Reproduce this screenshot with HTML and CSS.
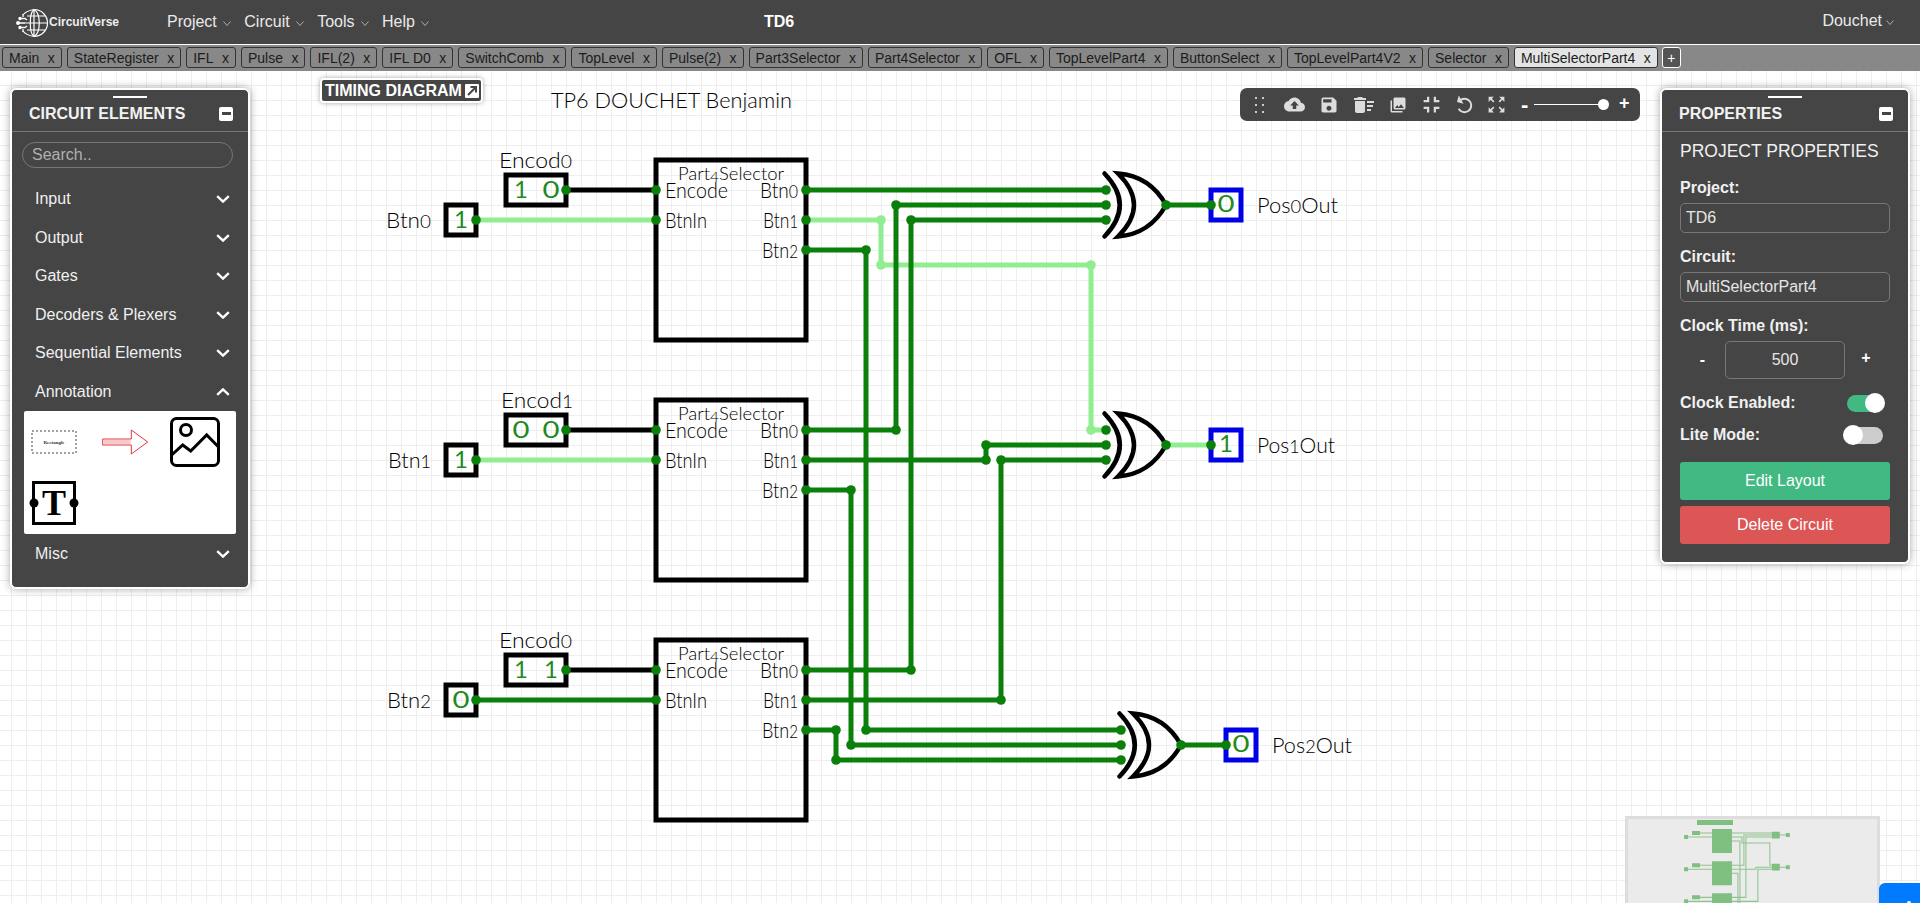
FILE: index.html
```html
<!DOCTYPE html>
<html lang="en">
<head>
<meta charset="utf-8">
<title>CircuitVerse - TD6</title>
<link rel="stylesheet" href="styles.css">
</head>
<body>
<svg class="defs" width="0" height="0" aria-hidden="true">
  <symbol id="nav-chev" viewBox="0 0 8 5"><path d="M.5.5 4 4.5 7.5.5" fill="none" stroke="#c8c8c8" stroke-width=".8"/></symbol>
  <symbol id="chev-down" viewBox="0 0 14 8"><path d="M1.2 1.2 7 6.6l5.8-5.4" fill="none" stroke="#fff" stroke-width="2.4"/></symbol>
  <symbol id="chev-up" viewBox="0 0 14 8"><path d="M1.2 6.8 7 1.4l5.8 5.4" fill="none" stroke="#fff" stroke-width="2.4"/></symbol>
</svg>

<header class="navbar">
  <div class="nav-left">
    <div class="logo">
      <svg class="globe" width="33" height="30" viewBox="0 0 33 30" fill="none" stroke="#fff" stroke-width="1.2">
        <path d="M18 1.5a13.5 13.5 0 1 1 0 27"/>
        <path d="M18 1.5C25 5 25 25 18 28.500M18 1.500C13 5 13 25 18 28.500M18 1.500V28.500"/>
        <path d="M11 8H29M9 15H31.500M11 22H29"/>
        <path d="M18 1.500C12 2.500 9 4 7 7M18 28.500C12 27.500 9 26 7 23"/>
        <path d="M2 15H9M4 10.500H9L11 12M4 19.500H9L11 18M7 6V9M7 24V21" stroke-width="1.300"/>
        <circle cx="2" cy="15" r="1.300" fill="#fff"/>
        <circle cx="4" cy="10.500" r="1.100" fill="#fff"/>
        <circle cx="4" cy="19.500" r="1.100" fill="#fff"/>
      </svg>
      <span class="logo-text">CircuitVerse</span>
    </div>
    <nav class="nav-menu">
      <div class="nav-item">Project<svg class="nav-chev"><use href="#nav-chev"/></svg></div>
      <div class="nav-item">Circuit<svg class="nav-chev"><use href="#nav-chev"/></svg></div>
      <div class="nav-item">Tools<svg class="nav-chev"><use href="#nav-chev"/></svg></div>
      <div class="nav-item">Help<svg class="nav-chev"><use href="#nav-chev"/></svg></div>
    </nav>
  </div>
  <div class="project-name">TD6</div>
  <div class="user">Douchet<svg class="nav-chev"><use href="#nav-chev"/></svg></div>
</header>

<div class="tabbar">
  <div class="tab"><span>Main</span><span class="tab-x">x</span></div>
  <div class="tab"><span>StateRegister</span><span class="tab-x">x</span></div>
  <div class="tab"><span>IFL</span><span class="tab-x">x</span></div>
  <div class="tab"><span>Pulse</span><span class="tab-x">x</span></div>
  <div class="tab"><span>IFL(2)</span><span class="tab-x">x</span></div>
  <div class="tab"><span>IFL D0</span><span class="tab-x">x</span></div>
  <div class="tab"><span>SwitchComb</span><span class="tab-x">x</span></div>
  <div class="tab"><span>TopLevel</span><span class="tab-x">x</span></div>
  <div class="tab"><span>Pulse(2)</span><span class="tab-x">x</span></div>
  <div class="tab"><span>Part3Selector</span><span class="tab-x">x</span></div>
  <div class="tab"><span>Part4Selector</span><span class="tab-x">x</span></div>
  <div class="tab"><span>OFL</span><span class="tab-x">x</span></div>
  <div class="tab"><span>TopLevelPart4</span><span class="tab-x">x</span></div>
  <div class="tab"><span>ButtonSelect</span><span class="tab-x">x</span></div>
  <div class="tab"><span>TopLevelPart4V2</span><span class="tab-x">x</span></div>
  <div class="tab"><span>Selector</span><span class="tab-x">x</span></div>
  <div class="tab tab-active"><span>MultiSelectorPart4</span><span class="tab-x">x</span></div>
  <div class="tab-add">+</div>
</div>

<main class="canvas">
  <svg class="circuit" width="1920" height="832" viewBox="0 71 1920 832">
    <!-- wires -->
    <path class="w-light" d="M476 220H656M476 460H656M806 220H881V265H1091V430H1106M1166 445H1211"/>
    <path class="w-black" d="M566 190H656M566 430H656M566 670H656"/>
    <path class="w-dark" d="M806 190H1106M806 250H866V730H1121M1106 205H896V430H806M1106 220H911V670H806M806 460H986V445H1106M1106 460H1001V700H806M806 490H851V745H1121M476 700H656M806 730H836V760H1121M1166 205H1211M1181 745H1226"/>

    <!-- selector blocks -->
    <rect class="box" x="656" y="160" width="150" height="180"/>
    <rect class="box" x="656" y="400" width="150" height="180"/>
    <rect class="box" x="656" y="640" width="150" height="180"/>

    <!-- input boxes -->
    <rect class="box" x="506" y="175" width="60" height="30"/>
    <rect class="box" x="446" y="205" width="30" height="30"/>
    <rect class="box" x="506" y="415" width="60" height="30"/>
    <rect class="box" x="446" y="445" width="30" height="30"/>
    <rect class="box" x="506" y="655" width="60" height="30"/>
    <rect class="box" x="446" y="685" width="30" height="30"/>

    <!-- output boxes -->
    <rect class="box-out" x="1211" y="190" width="30" height="30"/>
    <rect class="box-out" x="1211" y="430" width="30" height="30"/>
    <rect class="box-out" x="1226" y="730" width="30" height="30"/>

    <!-- XOR gates -->
    <g class="gate">
      <path d="M1104.5 173.5Q1135 205 1104.5 236.5M1118 173.5Q1150 205 1118 236.5Q1150 234 1166 205Q1150 176 1118 173.5Z"/>
      <path d="M1104.5 413.5Q1135 445 1104.5 476.5M1118 413.5Q1150 445 1118 476.5Q1150 474 1166 445Q1150 416 1118 413.5Z"/>
      <path d="M1119.5 713.5Q1150 745 1119.5 776.5M1133 713.5Q1165 745 1133 776.5Q1165 774 1181 745Q1165 716 1133 713.5Z"/>
    </g>

    <!-- nodes -->
    <g class="n-light">
      <circle cx="881" cy="220"/><circle cx="881" cy="265"/><circle cx="1091" cy="265"/><circle cx="1091" cy="430"/>
    </g>
    <g class="n-dark">
      <circle cx="566" cy="190"/><circle cx="476" cy="220"/><circle cx="656" cy="190"/><circle cx="656" cy="220"/>
      <circle cx="806" cy="190"/><circle cx="806" cy="220"/><circle cx="806" cy="250"/>
      <circle cx="566" cy="430"/><circle cx="476" cy="460"/><circle cx="656" cy="430"/><circle cx="656" cy="460"/>
      <circle cx="806" cy="430"/><circle cx="806" cy="460"/><circle cx="806" cy="490"/>
      <circle cx="566" cy="670"/><circle cx="476" cy="700"/><circle cx="656" cy="670"/><circle cx="656" cy="700"/>
      <circle cx="806" cy="670"/><circle cx="806" cy="700"/><circle cx="806" cy="730"/>
      <circle cx="1106" cy="190"/><circle cx="1106" cy="205"/><circle cx="1106" cy="220"/>
      <circle cx="1106" cy="430"/><circle cx="1106" cy="445"/><circle cx="1106" cy="460"/>
      <circle cx="1121" cy="730"/><circle cx="1121" cy="745"/><circle cx="1121" cy="760"/>
      <circle cx="1166" cy="205"/><circle cx="1211" cy="205"/>
      <circle cx="1166" cy="445"/><circle cx="1211" cy="445"/>
      <circle cx="1181" cy="745"/><circle cx="1226" cy="745"/>
      <circle cx="866" cy="250"/><circle cx="896" cy="205"/><circle cx="911" cy="220"/>
      <circle cx="896" cy="430"/><circle cx="986" cy="460"/><circle cx="986" cy="445"/>
      <circle cx="1001" cy="460"/><circle cx="851" cy="490"/><circle cx="851" cy="745"/>
      <circle cx="911" cy="670"/><circle cx="1001" cy="700"/><circle cx="866" cy="730"/>
      <circle cx="836" cy="730"/><circle cx="836" cy="760"/>
    </g>

    <!-- values -->
    <text class="val" x="521" y="198">1</text>
    <text class="val" x="551" y="198" textLength="17" lengthAdjust="spacingAndGlyphs">0</text>
    <text class="val" x="461" y="228">1</text>
    <text class="val" x="521" y="438" textLength="17" lengthAdjust="spacingAndGlyphs">0</text>
    <text class="val" x="551" y="438" textLength="17" lengthAdjust="spacingAndGlyphs">0</text>
    <text class="val" x="461" y="468">1</text>
    <text class="val" x="521" y="678">1</text>
    <text class="val" x="551" y="678">1</text>
    <text class="val" x="461" y="708" textLength="17" lengthAdjust="spacingAndGlyphs">0</text>
    <text class="val" x="1226" y="212" textLength="17" lengthAdjust="spacingAndGlyphs">0</text>
    <text class="val" x="1226" y="452">1</text>
    <text class="val" x="1241" y="752" textLength="17" lengthAdjust="spacingAndGlyphs">0</text>

    <!-- labels -->
    <text class="lbl title" x="551" y="108" textLength="241" lengthAdjust="spacingAndGlyphs">TP6 DOUCHET Benjamin</text>

    <text class="lbl" x="499" y="168" textLength="73" lengthAdjust="spacingAndGlyphs">Encod<tspan class="os">0</tspan></text>
    <text class="lbl" x="386" y="228" textLength="45" lengthAdjust="spacingAndGlyphs">Btn<tspan class="os">0</tspan></text>
    <text class="lbl sel" x="678" y="180" textLength="106" lengthAdjust="spacingAndGlyphs">Part<tspan class="os" dy="2">4</tspan><tspan dy="-2">Selector</tspan></text>
    <text class="lbl" x="665" y="198" textLength="63" lengthAdjust="spacingAndGlyphs">Encode</text>
    <text class="lbl" x="665" y="228" textLength="42" lengthAdjust="spacingAndGlyphs">BtnIn</text>
    <text class="lbl" x="760" y="198" textLength="38" lengthAdjust="spacingAndGlyphs">Btn<tspan class="os">0</tspan></text>
    <text class="lbl" x="763" y="228" textLength="35" lengthAdjust="spacingAndGlyphs">Btn<tspan class="os">1</tspan></text>
    <text class="lbl" x="762" y="258" textLength="36" lengthAdjust="spacingAndGlyphs">Btn<tspan class="os">2</tspan></text>

    <text class="lbl" x="501" y="408" textLength="72" lengthAdjust="spacingAndGlyphs">Encod<tspan class="os">1</tspan></text>
    <text class="lbl" x="388" y="468" textLength="43" lengthAdjust="spacingAndGlyphs">Btn<tspan class="os">1</tspan></text>
    <text class="lbl sel" x="678" y="420" textLength="106" lengthAdjust="spacingAndGlyphs">Part<tspan class="os" dy="2">4</tspan><tspan dy="-2">Selector</tspan></text>
    <text class="lbl" x="665" y="438" textLength="63" lengthAdjust="spacingAndGlyphs">Encode</text>
    <text class="lbl" x="665" y="468" textLength="42" lengthAdjust="spacingAndGlyphs">BtnIn</text>
    <text class="lbl" x="760" y="438" textLength="38" lengthAdjust="spacingAndGlyphs">Btn<tspan class="os">0</tspan></text>
    <text class="lbl" x="763" y="468" textLength="35" lengthAdjust="spacingAndGlyphs">Btn<tspan class="os">1</tspan></text>
    <text class="lbl" x="762" y="498" textLength="36" lengthAdjust="spacingAndGlyphs">Btn<tspan class="os">2</tspan></text>

    <text class="lbl" x="499" y="648" textLength="73" lengthAdjust="spacingAndGlyphs">Encod<tspan class="os">0</tspan></text>
    <text class="lbl" x="387" y="708" textLength="44" lengthAdjust="spacingAndGlyphs">Btn<tspan class="os">2</tspan></text>
    <text class="lbl sel" x="678" y="660" textLength="106" lengthAdjust="spacingAndGlyphs">Part<tspan class="os" dy="2">4</tspan><tspan dy="-2">Selector</tspan></text>
    <text class="lbl" x="665" y="678" textLength="63" lengthAdjust="spacingAndGlyphs">Encode</text>
    <text class="lbl" x="665" y="708" textLength="42" lengthAdjust="spacingAndGlyphs">BtnIn</text>
    <text class="lbl" x="760" y="678" textLength="38" lengthAdjust="spacingAndGlyphs">Btn<tspan class="os">0</tspan></text>
    <text class="lbl" x="763" y="708" textLength="35" lengthAdjust="spacingAndGlyphs">Btn<tspan class="os">1</tspan></text>
    <text class="lbl" x="762" y="738" textLength="36" lengthAdjust="spacingAndGlyphs">Btn<tspan class="os">2</tspan></text>

    <text class="lbl" x="1257" y="213" textLength="81" lengthAdjust="spacingAndGlyphs">Pos<tspan class="os">0</tspan>Out</text>
    <text class="lbl" x="1257" y="453" textLength="78" lengthAdjust="spacingAndGlyphs">Pos<tspan class="os">1</tspan>Out</text>
    <text class="lbl" x="1272" y="753" textLength="80" lengthAdjust="spacingAndGlyphs">Pos<tspan class="os">2</tspan>Out</text>
  </svg>

  <button class="timing-btn">TIMING DIAGRAM
    <span class="timing-icon"><svg width="14" height="14" viewBox="0 0 14 14"><path d="M3 11 10.5 3.5M5.5 3h5.5v5.5" fill="none" stroke="#454545" stroke-width="2"/></svg></span>
  </button>

  <aside class="panel panel-left">
    <div class="panel-head">
      <span class="handle"></span>
      <span class="panel-title">CIRCUIT ELEMENTS</span>
      <span class="minimize"></span>
    </div>
    <input class="search" placeholder="Search..">
    <ul class="accordion">
      <li class="acc-item">Input<svg class="acc-chev"><use href="#chev-down"/></svg></li>
      <li class="acc-item">Output<svg class="acc-chev"><use href="#chev-down"/></svg></li>
      <li class="acc-item">Gates<svg class="acc-chev"><use href="#chev-down"/></svg></li>
      <li class="acc-item">Decoders &amp; Plexers<svg class="acc-chev"><use href="#chev-down"/></svg></li>
      <li class="acc-item">Sequential Elements<svg class="acc-chev"><use href="#chev-down"/></svg></li>
      <li class="acc-item">Annotation<svg class="acc-chev"><use href="#chev-up"/></svg></li>
      <li class="icon-grid">
        <div class="icon-cell">
          <svg width="50" height="50" viewBox="0 0 50 50">
            <rect x="3" y="14" width="44" height="22" fill="none" stroke="#444" stroke-dasharray="2 2"/>
            <text class="rect-text" x="25" y="26.6">Rectangle</text>
          </svg>
        </div>
        <div class="icon-cell">
          <svg width="50" height="50" viewBox="0 0 50 50">
            <path d="M2.7 22H31.3V13L47.7 25 31.3 37V28H2.7Z" fill="#fff" stroke="#e0343a"/>
            <path d="M3.5 23H30.5V27H3.5Z" fill="#f6c9cb"/>
          </svg>
        </div>
        <div class="icon-cell">
          <svg width="50" height="50" viewBox="0 0 50 50" fill="none" stroke="#000" stroke-width="3">
            <rect x="1.5" y="1.5" width="47" height="47" rx="5"/>
            <circle cx="16" cy="13" r="5.5"/>
            <path d="M1.7 38 12.7 28 20.7 34 36.7 18 48.3 29.7"/>
          </svg>
        </div>
        <div class="icon-cell">
          <svg width="50" height="50" viewBox="0 0 50 50">
            <rect x="4.5" y="4.5" width="41" height="41" fill="none" stroke="#000" stroke-width="3"/>
            <text class="t-icon" x="25" y="37">T</text>
            <circle cx="5" cy="25" r="4.5"/><circle cx="45" cy="25" r="4.5"/>
          </svg>
        </div>
      </li>
      <li class="acc-item last">Misc<svg class="acc-chev"><use href="#chev-down"/></svg></li>
    </ul>
  </aside>

  <div class="toolbar">
    <div class="drag-dots"><i></i><i></i><i></i><i></i><i></i><i></i></div>
    <span class="tb-icon wide"><svg width="21" height="21" viewBox="0 0 24 24"><path d="M19.35 10.04C18.67 6.59 15.64 4 12 4 9.11 4 6.6 5.64 5.35 8.04 2.34 8.36 0 10.91 0 14c0 3.31 2.69 6 6 6h13c2.76 0 5-2.24 5-5 0-2.64-2.05-4.78-4.65-4.96zM14 13v4h-4v-4H7l5-5 5 5h-3z"/></svg></span>
    <span class="tb-icon wide"><svg width="20" height="20" viewBox="0 0 24 24"><path d="M17 3H5c-1.11 0-2 .9-2 2v14c0 1.1.89 2 2 2h14c1.1 0 2-.9 2-2V7l-4-4zm-5 16c-1.66 0-3-1.34-3-3s1.34-3 3-3 3 1.34 3 3-1.34 3-3 3zm3-10H5V5h10v4z"/></svg></span>
    <span class="tb-icon wide"><svg width="24" height="24" viewBox="0 0 24 24"><path d="M15 16h4v2h-4zm0-8h7v2h-7zm0 4h6v2h-6zM3 18c0 1.1.9 2 2 2h6c1.1 0 2-.9 2-2V8H3v10zM14 5h-3l-1-1H6L5 5H2v2h12z"/></svg></span>
    <span class="tb-icon wide"><svg width="18" height="18" viewBox="0 0 24 24"><path d="M22 16V4c0-1.1-.9-2-2-2H8c-1.1 0-2 .9-2 2v12c0 1.1.9 2 2 2h12c1.1 0 2-.9 2-2zm-11-4l2.03 2.71L16 11l4 5H8l3-4zM2 6v14c0 1.1.9 2 2 2h14v-2H4V6H2z"/></svg></span>
    <span class="tb-icon"><svg width="27" height="27" viewBox="0 0 24 24"><path d="M5 16h3v3h2v-5H5v2zm3-8H5v2h5V5H8v3zm6 11h2v-3h3v-2h-5v5zm2-11V5h-2v5h5V8h-3z"/></svg></span>
    <span class="tb-icon"><svg width="23" height="23" viewBox="0 0 24 24"><path transform="rotate(-30 12 13)" d="M12 5V1L7 6l5 5V7c3.31 0 6 2.69 6 6s-2.69 6-6 6-6-2.69-6-6H4c0 4.42 3.58 8 8 8s8-3.58 8-8-3.58-8-8-8z"/></svg></span>
    <span class="tb-icon"><svg width="21" height="21" viewBox="0 0 24 24"><path d="M15 3l2.3 2.3-2.89 2.87 1.42 1.42L18.7 6.7 21 9V3h-6zM3 9l2.3-2.3 2.87 2.89 1.42-1.42L6.7 5.3 9 3H3v6zm6 12l-2.3-2.3 2.89-2.87-1.42-1.42L5.3 17.3 3 15v6h6zm12-6l-2.3 2.3-2.87-2.89-1.42 1.42 2.89 2.87L15 21h6v-6z"/></svg></span>
    <span class="zoom-minus">-</span>
    <div class="zoom-track"><span class="zoom-knob"></span></div>
    <span class="zoom-plus">+</span>
  </div>

  <aside class="panel panel-right">
    <div class="panel-head">
      <span class="handle"></span>
      <span class="panel-title">PROPERTIES</span>
      <span class="minimize"></span>
    </div>
    <div class="props">
      <div class="props-title">PROJECT PROPERTIES</div>
      <label class="prop-label first">Project:</label>
      <input class="prop-input" value="TD6">
      <label class="prop-label">Circuit:</label>
      <input class="prop-input" value="MultiSelectorPart4">
      <label class="prop-label">Clock Time (ms):</label>
      <div class="clock-row">
        <span class="clock-btn minus">-</span>
        <input class="clock-input" value="500">
        <span class="clock-btn plus">+</span>
      </div>
      <div class="toggle-row clock-enabled"><span class="toggle-label">Clock Enabled:</span><span class="toggle on"><i></i></span></div>
      <div class="toggle-row lite"><span class="toggle-label">Lite Mode:</span><span class="toggle off"><i></i></span></div>
      <button class="action edit">Edit Layout</button>
      <button class="action delete">Delete Circuit</button>
    </div>
  </aside>

  <div class="minimap">
    <svg width="255" height="87" viewBox="1625 816 255 87">
      <rect class="mm-fill" x="1697" y="820" width="36" height="5"/>
      <g transform="translate(1624.75 807.56) scale(.133 .134)">
        <path class="mm-wire" d="M476 220H656M476 460H656M806 220H881V265H1091V430H1106M1166 445H1211M566 190H656M566 430H656M566 670H656M806 190H1106M806 250H866V730H1121M1106 205H896V430H806M1106 220H911V670H806M806 460H986V445H1106M1106 460H1001V700H806M806 490H851V745H1121M476 700H656M806 730H836V760H1121M1166 205H1211"/>
        <path class="mm-fill" d="M656 160H806V340H656ZM656 400H806V580H656ZM656 640H806V820H656ZM506 175H566V205H506ZM446 205H476V235H446ZM506 415H566V445H506ZM446 445H476V475H446ZM506 655H566V685H506ZM446 685H476V715H446ZM1106 180H1166V230H1106ZM1106 420H1166V470H1106ZM1121 720H1181V770H1121ZM1211 190H1241V220H1211ZM1211 430H1241V460H1211Z"/>
      </g>
    </svg>
  </div>
  <div class="help-btn"><i></i></div>
</main>
</body>
</html>
```

FILE: styles.css
```css
* { box-sizing: border-box; }

html, body {
  margin: 0;
  height: 100%;
}

body {
  display: flex;
  flex-direction: column;
  height: 100vh;
  overflow: hidden;
  background: #fff;
  color: #fff;
  font-family: "Liberation Sans", Arial, sans-serif;
  font-size: 16px;
}

.defs { position: absolute; }

/* top bar */
.navbar {
  flex: none;
  display: flex;
  align-items: center;
  height: 44px;
  background: #454545;
}
.nav-left {
  flex: none;
  display: flex;
  align-items: center;
  width: 764px;
}
.logo {
  display: flex;
  align-items: center;
  width: 167px;
  padding-left: 16px;
}
.globe { flex: none; margin-top: 1px; }
.logo-text {
  font-size: 12px;
  font-weight: 700;
  color: #eee;
}
.nav-menu { display: flex; }
.nav-item {
  display: flex;
  align-items: center;
  margin-right: 13.5px;
  color: #eaeaea;
}
.nav-chev {
  width: 8px;
  height: 5px;
  margin-left: 6px;
  margin-top: 3px;
}
.project-name { font-weight: 700; }
.user {
  display: flex;
  align-items: center;
  margin-left: auto;
  margin-right: 26px;
  margin-bottom: 3px;
  color: #eaeaea;
}
.user .nav-chev { margin-left: 4px; }

/* tabs */
.tabbar {
  flex: none;
  display: flex;
  align-items: center;
  gap: 5px;
  height: 27px;
  padding: 0 0 1px 2px;
  border-top: 1px solid #fff;
  background: #888;
}
.tab {
  display: flex;
  align-items: center;
  gap: 8.5px;
  height: 21px;
  padding: 0 6px;
  border: 1px solid #333;
  border-radius: 3px;
  font-size: 14px;
  color: #1c1c1c;
  white-space: nowrap;
}
.tab-active { background: #e4e4e4; }
.tab-add {
  display: flex;
  align-items: center;
  justify-content: center;
  width: 19px;
  height: 21px;
  margin-left: -1px;
  border: 1px solid #fff;
  border-radius: 3px;
  background: #555;
  font-size: 14px;
  color: #fff;
}

/* canvas */
.canvas {
  flex: 1;
  position: relative;
  overflow: hidden;
  background-color: #fff;
  background-image:
    linear-gradient(to right, #eee 1px, transparent 1px),
    linear-gradient(to bottom, #eee 1px, transparent 1px);
  background-size: 15px 15px;
  background-position: 11px 14px;
}
.circuit {
  position: absolute;
  left: 0;
  top: 0;
}
.w-light, .w-dark, .w-black {
  fill: none;
  stroke-width: 5;
}
.w-light { stroke: #90ee90; }
.w-dark { stroke: #0a7f0a; }
.w-black { stroke: #000; }
.box { fill: none; stroke: #000; stroke-width: 5; }
.box-out { fill: none; stroke: #0000e6; stroke-width: 5; }
.gate path {
  fill: none;
  stroke: #000;
  stroke-width: 4.5;
  stroke-linecap: round;
}
.n-light circle, .n-dark circle { r: 4.8px; }
.n-light { fill: #90ee90; }
.n-dark { fill: #0a7f0a; }
.val {
  font-family: Lato, sans-serif;
  font-size: 24px;
  fill: #1f8a1f;
  text-anchor: middle;
}
.lbl {
  font-family: Lato, sans-serif;
  font-size: 21px;
  font-weight: 300;
  fill: #000;
}
.lbl.sel { font-size: 17px; }
.lbl.title { font-size: 22px; }
.os { font-size: .84em; }

/* timing diagram */
.timing-btn {
  position: absolute;
  left: 320px;
  top: 7px;
  display: flex;
  align-items: center;
  justify-content: space-between;
  width: 163px;
  height: 25px;
  padding: 0 2px 0 3px;
  border: 2px solid #fff;
  border-radius: 4px;
  background: #454545;
  box-shadow: 0 0 5px rgba(0, 0, 0, .35);
  font: 700 16px "Liberation Sans", Arial, sans-serif;
  color: #fff;
  white-space: nowrap;
}
.timing-icon {
  display: flex;
  width: 14px;
  height: 14px;
  border-radius: 1px;
  background: #fff;
}

/* panels */
.panel {
  position: absolute;
  top: 18px;
  border: 1px solid #fff;
  border-radius: 5px;
  background: #454545;
  box-shadow: 0 0 0 1px #fff, 0 0 8px 1px rgba(0, 0, 0, .35);
}
.panel-left { left: 11px; width: 238px; height: 499px; }
.panel-right { left: 1661px; width: 248px; height: 474px; }
.panel-head {
  position: relative;
  display: flex;
  align-items: center;
  justify-content: space-between;
  height: 42px;
  padding: 6px 15px 0 17px;
  border-bottom: 1px solid #777;
}
.handle {
  position: absolute;
  top: 6px;
  left: 50%;
  width: 34px;
  height: 2px;
  margin-left: -17px;
  background: #fff;
}
.panel-title { font-weight: 700; color: #f2f2f2; }
.minimize {
  display: flex;
  align-items: center;
  justify-content: center;
  width: 14px;
  height: 14px;
  border-radius: 2px;
  background: #fff;
}
.minimize::after {
  content: "";
  width: 9px;
  height: 3px;
  background: #454545;
}

/* left panel */
.search {
  display: block;
  width: 211px;
  height: 26px;
  margin: 10px 0 0 10px;
  padding: 0 9px;
  border: 1px solid #777;
  border-radius: 13px;
  background: transparent;
  font: 16px "Liberation Sans", Arial, sans-serif;
  color: #fff;
  outline: none;
}
.search::placeholder { color: #b0b0b0; opacity: 1; }
.accordion {
  margin: 12px 0 0;
  padding: 0;
  list-style: none;
}
.acc-item {
  display: flex;
  align-items: center;
  justify-content: space-between;
  height: 38.5px;
  padding: 0 18px 0 23px;
  color: #f0f0f0;
}
.acc-item.last { padding-top: 2px; }
.acc-chev { width: 14px; height: 8px; }
.icon-grid {
  display: grid;
  grid-template-columns: repeat(3, 60px);
  column-gap: 10.5px;
  grid-auto-rows: 61.5px;
  width: 212px;
  height: 123px;
  margin: 0 0 0 12px;
  border-radius: 2px;
  background: #fff;
}
.icon-cell {
  display: flex;
  align-items: center;
  justify-content: center;
}
.rect-text {
  font: 700 5px "Liberation Serif", serif;
  fill: #333;
  text-anchor: middle;
}
.t-icon {
  font: 700 36px "Liberation Serif", serif;
  fill: #000;
  text-anchor: middle;
}

/* toolbar */
.toolbar {
  position: absolute;
  left: 1240px;
  top: 17px;
  display: flex;
  align-items: center;
  width: 400px;
  height: 33px;
  padding-left: 15px;
  border-radius: 7px;
  background: #454545;
}
.drag-dots {
  display: grid;
  grid-template-columns: 2px 2px;
  gap: 5px 5px;
  width: 22.5px;
}
.drag-dots i {
  width: 2px;
  height: 2px;
  background: #ccc;
}
.tb-icon {
  flex: none;
  display: flex;
  align-items: center;
  justify-content: center;
  width: 32.5px;
  fill: #ddd;
}
.tb-icon.wide { width: 34.5px; }
.zoom-minus {
  flex: none;
  width: 13px;
  margin-left: 8px;
  font-size: 22px;
  font-weight: 700;
  line-height: 20px;
  color: #fff;
}
.zoom-track {
  position: relative;
  flex: none;
  width: 74px;
  height: 1px;
  background: #fff;
}
.zoom-knob {
  position: absolute;
  left: 64px;
  top: -5px;
  width: 11px;
  height: 11px;
  border-radius: 50%;
  background: #fff;
}
.zoom-plus {
  flex: none;
  margin: -3px 0 0 11px;
  font-size: 18px;
  font-weight: 700;
  line-height: 20px;
  color: #fff;
}

/* right panel */
.props {
  display: flex;
  flex-direction: column;
  padding: 0 18px 0 18px;
}
.props-title {
  height: 39px;
  font-size: 17.5px;
  line-height: 39px;
  color: #f0f0f0;
  white-space: nowrap;
}
.prop-label {
  height: 24px;
  margin-top: 11px;
  font-weight: 700;
  line-height: 26px;
  color: #f0f0f0;
}
.prop-label.first { margin-top: 4px; }
.prop-input {
  flex: none;
  width: 210px;
  height: 30px;
  margin-top: 4px;
  padding: 0 5px;
  border: 1px solid #777;
  border-radius: 5px;
  background: transparent;
  font: 16px "Liberation Sans", Arial, sans-serif;
  color: #e6e6e6;
  outline: none;
}
.clock-row {
  display: flex;
  align-items: center;
  height: 38px;
  margin-top: 4px;
}
.clock-btn { font-weight: 700; text-align: center; }
.clock-btn.minus { width: 45px; }
.clock-btn.plus { width: 42px; margin-top: -4px; }
.clock-input {
  flex: none;
  width: 120px;
  height: 38px;
  border: 1px solid #777;
  border-radius: 5px;
  background: transparent;
  font: 16px "Liberation Sans", Arial, sans-serif;
  color: #e6e6e6;
  text-align: center;
  outline: none;
}
.toggle-row {
  display: flex;
  align-items: center;
  justify-content: space-between;
  height: 24px;
  padding-right: 7px;
  font-weight: 700;
  color: #f0f0f0;
}
.toggle-label { margin-top: 2px; }
.clock-enabled { margin-top: 11px; }
.lite { margin-top: 8px; }
.toggle {
  position: relative;
  display: block;
  width: 36px;
  height: 17px;
  margin-top: 2px;
  border-radius: 9px;
}
.toggle i {
  position: absolute;
  top: -2px;
  width: 20px;
  height: 20px;
  border-radius: 50%;
  background: #fff;
}
.toggle.on { background: #42b983; }
.toggle.on i { right: -2px; }
.toggle.off { background: #ccc; }
.toggle.off i { left: -4px; }
.action {
  flex: none;
  width: 210px;
  height: 38px;
  border: 0;
  border-radius: 3px;
  font: 16px "Liberation Sans", Arial, sans-serif;
  color: #fff;
}
.edit { margin-top: 16px; background: #42b983; }
.delete { margin-top: 6px; background: #dc5656; }

/* minimap */
.minimap {
  position: absolute;
  left: 1625px;
  top: 745px;
  width: 255px;
  height: 90px;
  border: 3px solid #ddd;
  background: #ebebeb;
  overflow: hidden;
}
.minimap svg { display: block; margin: -3px 0 0 -3px; }
.mm-fill { fill: #7fbf7f; }
.mm-wire { fill: none; stroke: #8fc48f; stroke-width: 8; }

.help-btn {
  position: absolute;
  left: 1879px;
  top: 812px;
  width: 41px;
  height: 20px;
  border-top-left-radius: 6px;
  background: #007bff;
}
.help-btn i {
  position: absolute;
  left: 28px;
  top: 18px;
  width: 4px;
  height: 4px;
  border-radius: 50%;
  background: #fff;
}
```
